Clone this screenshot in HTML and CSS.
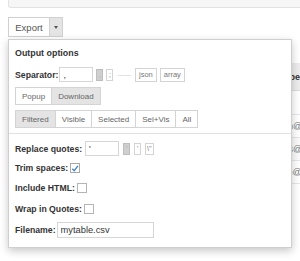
FILE: index.html
```html
<!DOCTYPE html>
<html lang="en">
<head>
    <meta charset="UTF-8">
    <meta name="viewport" content="width=device-width, initial-scale=1.0">
    <title>Output widget</title>
    <link rel="stylesheet" href="styles.css">
</head>
<body>

<div class="page">
    <div class="code-box"></div>

    <div class="export-group">
        <button class="export-btn">Export</button>
        <button class="caret-btn"><span class="caret"></span></button>
    </div>

    <table class="data-table">
        <colgroup>
            <col class="col-name">
            <col class="col-mail">
        </colgroup>
        <thead>
            <tr><th>Name</th><th>Member</th></tr>
        </thead>
        <tbody>
            <tr class="filter-row"><td></td><td></td></tr>
            <tr><td>Tom</td><td>tsmith@mail.com</td></tr>
            <tr class="odd"><td>Tina</td><td>tjones@mail.com</td></tr>
            <tr><td>John</td><td>jsmith@mail.com</td></tr>
        </tbody>
    </table>

    <!-- menu desplegable de opciones -->
    <div class="output-menu">
        <div class="title">Output options</div>

        <div class="row sep-row">
            <label class="lbl">Separator:</label>
            <input class="txt" type="text" value=",">
            <button class="mini active">,</button>
            <button class="mini">;</button>
            <span class="faint">&#8210;&#8210; &#8210;&#8210;</span>
            <button class="mini word">json</button>
            <button class="mini word">array</button>
        </div>

        <div class="btn-group">
            <button>Popup</button>
            <button class="on">Download</button>
        </div>

        <div class="btn-group">
            <button class="on">Filtered</button>
            <button>Visible</button>
            <button>Selected</button>
            <button>Sel+Vis</button>
            <button>All</button>
        </div>

        <div class="divider"></div>

        <div class="row quote-row">
            <label class="lbl">Replace quotes:</label>
            <input class="txt" type="text" value="'">
            <button class="mini active">'</button>
            <button class="mini">'</button>
            <button class="mini">\"</button>
        </div>

        <div class="row check-row first">
            <label class="lbl">Trim spaces:</label>
            <span class="box checked">
                <svg width="9" height="9" viewBox="0 0 9 9"><path d="M1.5 4.8 L3.6 7 L7.8 1.6" fill="none" stroke="#3c7fc4" stroke-width="1.4"/></svg>
            </span>
        </div>
        <div class="row check-row">
            <label class="lbl">Include HTML:</label>
            <span class="box"></span>
        </div>
        <div class="row check-row tall">
            <label class="lbl">Wrap in Quotes:</label>
            <span class="box"></span>
        </div>

        <div class="row file-row">
            <label class="lbl">Filename:</label>
            <input class="txt file" type="text" value="mytable.csv">
        </div>
    </div>
</div>

</body>
</html>
```

FILE: styles.css
```css
body {
    font-family: "Liberation Sans", Arial, sans-serif;
    background-color: white;
    margin: 0;
    padding: 0;
    color: #333;
}
.page {
    position: relative;
    width: 300px;
    height: 261px;
    overflow: hidden;
}
.code-box {
    height: 7px;
    margin-left: 8px;
    margin-right: -10px;
    background-color: #f6f6f6;
    border: 1px solid #e2e2e2;
    border-top: none;
    border-radius: 0 0 0 3px;
}
.export-group {
    display: flex;
    margin: 9px 0 0 8px;
    height: 20px;
}
.export-group button {
    font-family: inherit;
    border: 1px solid #d0d0d0;
    background-color: white;
    color: #555;
    margin: 0;
    padding: 0;
}
.export-btn {
    width: 42px;
    font-size: 9.5px;
}
.caret-btn {
    width: 14px;
    margin-left: -1px !important;
    background-color: #e4e4e4 !important;
    display: flex;
    align-items: center;
    justify-content: center;
}
.caret {
    width: 0;
    height: 0;
    border-left: 2.5px solid transparent;
    border-right: 2.5px solid transparent;
    border-top: 3px solid #555;
}

/* tabla que queda detras del menu */
.data-table {
    margin: 26px 0 0 8px;
    border-collapse: collapse;
    width: 360px;
    font-size: 9px;
}
.col-name {
    width: 257px;
}
.data-table th {
    background-color: #ececec;
    height: 27px;
    padding: 0 4px;
    text-align: left;
    font-weight: bold;
    color: #333;
    border-bottom: 1px solid #ddd;
}
.data-table td {
    height: 22px;
    padding: 0 4px;
    border-bottom: 1px solid #e6e6e6;
    color: #777;
}
.data-table .filter-row td {
    height: 23px;
}
.data-table .odd td {
    background-color: #fafafa;
}

/* menu */
.output-menu {
    position: absolute;
    left: 8px;
    top: 39px;
    width: 269px;
    height: 191px;
    padding: 8px 7px 8px 6px;
    background-color: white;
    border: 1px solid #cfcfcf;
    box-shadow: 0 3px 8px rgba(0, 0, 0, 0.22);
}
.title {
    font-size: 8.9px;
    font-weight: bold;
    height: 11px;
    line-height: 11px;
}
.row {
    display: flex;
    align-items: center;
}
.lbl {
    font-size: 8.7px;
    font-weight: bold;
    color: #333;
    margin-right: 2px;
}
.txt {
    font-family: inherit;
    font-size: 9px;
    width: 34px;
    height: 15px;
    box-sizing: border-box;
    border: 1px solid #d6d6d6;
    padding: 0 3px;
    color: #333;
    margin: 0;
}
.sep-row {
    margin-top: 8px;
    height: 15px;
}
.sep-row .lbl {
    margin-right: 1px;
}
.mini {
    font-family: inherit;
    font-size: 7px;
    height: 12px;
    min-width: 7px;
    padding: 0 1px;
    margin: 0 0 0 3px;
    border: 1px solid #d4d4d4;
    background-color: white;
    color: #777;
    line-height: 10px;
}
.mini.active {
    background-color: #cfcfcf;
    border-color: #bdbdbd;
    color: #aaa;
}
.mini.word {
    font-size: 7.5px;
    padding: 0 3px;
    height: 14px;
}
.faint {
    font-size: 7px;
    color: #d4d4d4;
    margin: 0 2px 0 4px;
    letter-spacing: -1px;
}
.btn-group {
    display: flex;
    margin-top: 5px;
    height: 18px;
}
.btn-group button {
    font-family: inherit;
    font-size: 8px;
    color: #666;
    padding: 0 6px;
    margin: 0 0 0 -1px;
    border: 1px solid #d4d4d4;
    background-color: white;
}
.btn-group button:first-child {
    margin-left: 0;
}
.btn-group button.on {
    background-color: #e4e4e4;
}
.divider {
    margin: 5px -7px 0 -6px;
    border-top: 1px solid #e2e2e2;
}
.quote-row {
    margin-top: 7px;
    height: 15px;
}
.quote-row .lbl {
    margin-right: 3px;
}
.quote-row .mini {
    margin-left: 4px;
}
.check-row {
    height: 20px;
}
.check-row.first {
    margin-top: 2px;
}
.check-row.tall {
    height: 21px;
}
.box {
    width: 8px;
    height: 8px;
    border: 1px solid #b4b4b4;
    background-color: white;
    display: flex;
    align-items: center;
    justify-content: center;
}
.box svg {
    display: block;
}
.box.checked {
    border-color: #a8a8a8;
}
.file-row {
    margin-top: 3px;
    height: 16px;
}
.file-row .lbl {
    margin-right: 1px;
}
.txt.file {
    width: 97px;
    height: 16px;
    font-size: 9.3px;
}
```
